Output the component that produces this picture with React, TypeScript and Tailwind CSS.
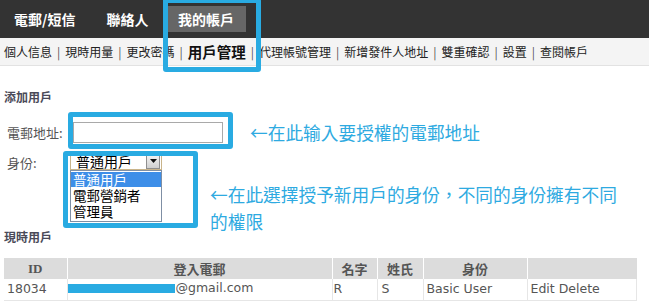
import React from 'react';

const cjk = '"Noto Sans CJK TC", "Noto Sans", sans-serif';
const subNav = ['個人信息', '現時用量', '更改密碼', '用戶管理', '代理帳號管理', '新增發件人地址', '雙重確認', '設置', '查閱帳戶'];

function Arrow() {
  return (
    <span className="flex h-[15px] w-[14px] items-center justify-center border border-[#8f8f8f] bg-gradient-to-b from-[#f4f4f4] to-[#cfcfcf]">
      <svg width="7" height="4" viewBox="0 0 7 4">
        <path d="M0 0h7L3.5 4z" fill="#111" />
      </svg>
    </span>
  );
}

export default function App() {
  return (
    <div className="relative h-[308px] w-[649px] overflow-hidden bg-white" style={{ fontFamily: cjk }}>
      {/* top tabs */}
      <div className="flex h-[38px] items-center bg-[#333] text-[14px] font-bold text-white">
        <span className="ml-[14px]">電郵/短信</span>
        <span className="ml-[31px]">聯絡人</span>
        <span className="ml-[17px] flex h-[26px] w-[81px] items-center justify-center bg-[#666]">我的帳戶</span>
      </div>

      {/* sub nav */}
      <div className="flex h-[28px] items-center border-b border-[#e2e2e2] bg-[#f4f4f4] pl-[4px] text-[12px] text-[#222]">
        {subNav.map((s, i) => (
          <React.Fragment key={s}>
            {i > 0 && <span className="px-[5px] text-[#555]">|</span>}
            <span className={s === '用戶管理' ? 'text-[14.5px] font-bold text-[#111]' : ''}>{s}</span>
          </React.Fragment>
        ))}
      </div>

      <div className="pl-[4px]">
        <div className="mt-[24px] text-[12px] font-bold leading-[14px] text-[#4a4a58]">添加用戶</div>

        {/* email row */}
        <div className="mt-[18px] flex h-[21px] items-center text-[13px] text-[#555]">
          <span className="ml-[3px] w-[66px]">電郵地址:</span>
          <div className="h-[21px] w-[150px] border border-[#a9a9a9] bg-white" />
          <span className="ml-[27px] text-[17.7px] text-[#2eaae1]">←在此输入要授權的電郵地址</span>
        </div>

        {/* role row */}
        <div className="mt-[9px] flex items-start text-[13px] text-[#555]">
          <span className="ml-[3px] mt-[1px] w-[63px]">身份:</span>
          <div>
            <div className="flex h-[18px] w-[92px] items-center justify-between border border-[#c9b48a] pl-[5px] pr-[1px] text-[14px] leading-none text-black">
              <span>普通用戶</span>
              <Arrow />
            </div>
            <div className="flex h-[52px] w-[92px] flex-col border border-[#7f8fa4] bg-white pt-[1px] text-[13.5px] text-black">
              <span className="block h-[15px] bg-[#3d8ee8] pl-[2px] leading-[15px] text-white">普通用戶</span>
              <span className="block h-[16px] pl-[2px] leading-[16px]">電郵營銷者</span>
              <span className="block h-[16px] pl-[2px] leading-[16px]">管理員</span>
            </div>
          </div>
          <div className="ml-[48px] mt-[29px] text-[17.7px] leading-[27px] text-[#2eaae1]">
            <div>←在此選擇授予新用戶的身份，不同的身份擁有不同</div>
            <div>的權限</div>
          </div>
        </div>

        <div className="-mt-[5px] text-[12px] font-bold leading-[14px] text-[#4a4a58]">現時用戶</div>

        {/* table */}
        <table className="mt-[14px] w-[633px] border-collapse text-[13px] text-[#555]">
          <thead>
            <tr className="h-[21px] bg-[#dcdcdc] font-bold">
              <th className="w-[63px] border-r border-white" style={{ fontFamily: '"Liberation Serif", serif' }}>ID</th>
              <th className="w-[265px] border-r border-white">登入電郵</th>
              <th className="w-[45px] border-r border-white">名字</th>
              <th className="w-[46px] border-r border-white">姓氏</th>
              <th className="w-[104px] border-r border-white">身份</th>
              <th></th>
            </tr>
          </thead>
          <tbody style={{ fontFamily: '"DejaVu Sans", sans-serif' }}>
            <tr className="h-[21px] border-b border-[#e6e6e6] text-[12.5px]">
              <td className="border-r border-[#e6e6e6] pl-[3px]">18034</td>
              <td className="border-r border-[#e6e6e6]">
                <span className="inline-flex items-center">
                  <span className="mr-[1px] inline-block h-[9px] w-[107px] bg-[#29abe2]" />
                  @gmail.com
                </span>
              </td>
              <td className="border-r border-[#e6e6e6] pl-[1px]">R</td>
              <td className="border-r border-[#e6e6e6] pl-[4px]">S</td>
              <td className="border-r border-[#e6e6e6] pl-[3px]">Basic User</td>
              <td className="border-r border-[#e6e6e6] pl-[3px]">Edit Delete</td>
            </tr>
          </tbody>
        </table>
      </div>

      {/* annotation highlight boxes */}
      <div className="absolute left-[163px] top-[-2px] h-[74px] w-[98px] rounded-[3px] border-[5px] border-[#29abe2]" />
      <div className="absolute left-[68px] top-[112px] h-[37px] w-[165px] rounded-[3px] border-[5px] border-[#29abe2]" />
      <div className="absolute left-[63px] top-[151px] h-[77px] w-[135px] rounded-[3px] border-[5px] border-[#29abe2]" />
    </div>
  );
}
